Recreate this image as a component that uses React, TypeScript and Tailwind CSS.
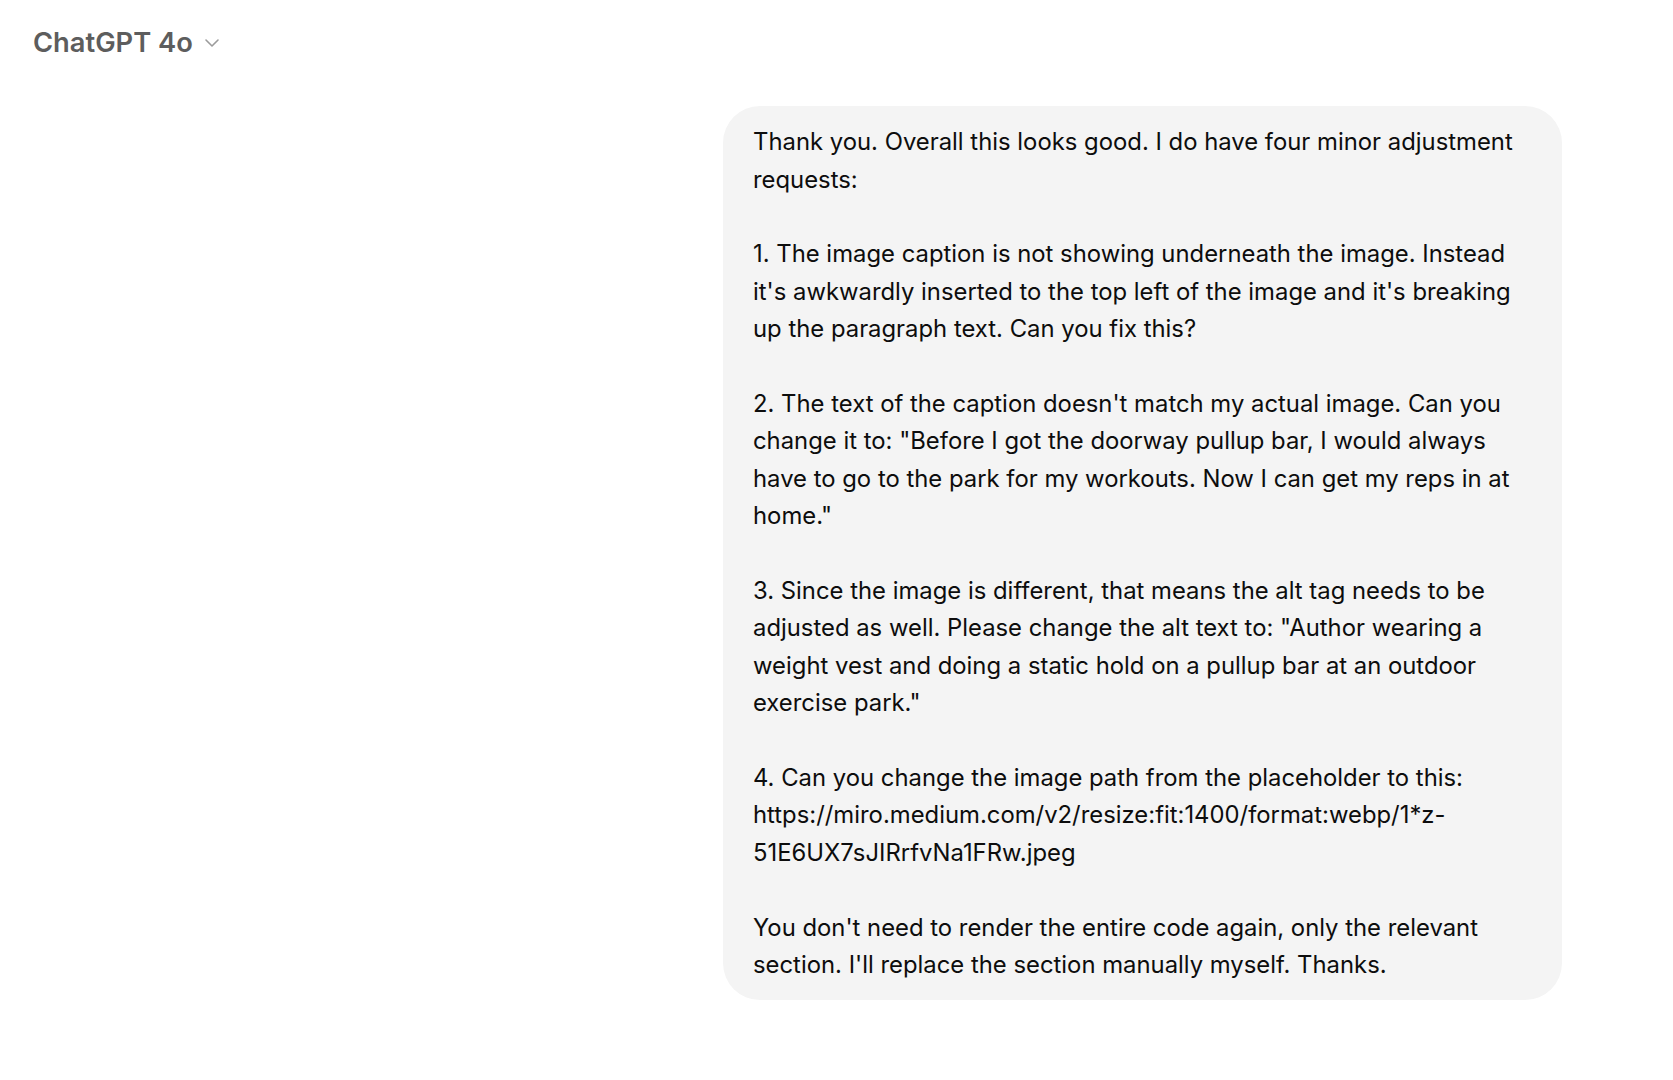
import { ChevronDown } from "lucide-react";

const lines: string[] = [
  "Thank you. Overall this looks good. I do have four minor adjustment",
  "requests:",
  "",
  "1. The image caption is not showing underneath the image. Instead",
  "it's awkwardly inserted to the top left of the image and it's breaking",
  "up the paragraph text. Can you fix this?",
  "",
  "2. The text of the caption doesn't match my actual image. Can you",
  'change it to: "Before I got the doorway pullup bar, I would always',
  "have to go to the park for my workouts. Now I can get my reps in at",
  'home."',
  "",
  "3. Since the image is different, that means the alt tag needs to be",
  'adjusted as well. Please change the alt text to: "Author wearing a',
  "weight vest and doing a static hold on a pullup bar at an outdoor",
  'exercise park."',
  "",
  "4. Can you change the image path from the placeholder to this:",
  "https://miro.medium.com/v2/resize:fit:1400/format:webp/1*z-",
  "51E6UX7sJIRrfvNa1FRw.jpeg",
  "",
  "You don't need to render the entire code again, only the relevant",
  "section. I'll replace the section manually myself. Thanks.",
];

const App = () => {
  return (
    <div className="min-h-screen w-full bg-white font-['Inter',sans-serif]">
      {/* header */}
      <div className="flex items-center gap-[7px] pl-[33px] pt-[29px]">
        <span className="text-[27.3px] font-semibold leading-none text-[#5d5d5d]">ChatGPT 4o</span>
        <ChevronDown className="h-[24px] w-[24px] text-[#9b9b9b]" strokeWidth={1.6} />
      </div>

      {/* message */}
      <div className="flex justify-end pr-[111px] pt-[50px]">
        <div className="w-[839px] rounded-[37px] bg-[#f4f4f4] pl-[30px] pr-[20px] pt-[17px] pb-[17px]">
          {lines.map((line, i) => (
            <div key={i} className="h-[37.4px] whitespace-nowrap text-[23.85px] leading-[37.4px] text-[#0d0d0d]">
              {line}
            </div>
          ))}
        </div>
      </div>
    </div>
  );
};

export default App;
